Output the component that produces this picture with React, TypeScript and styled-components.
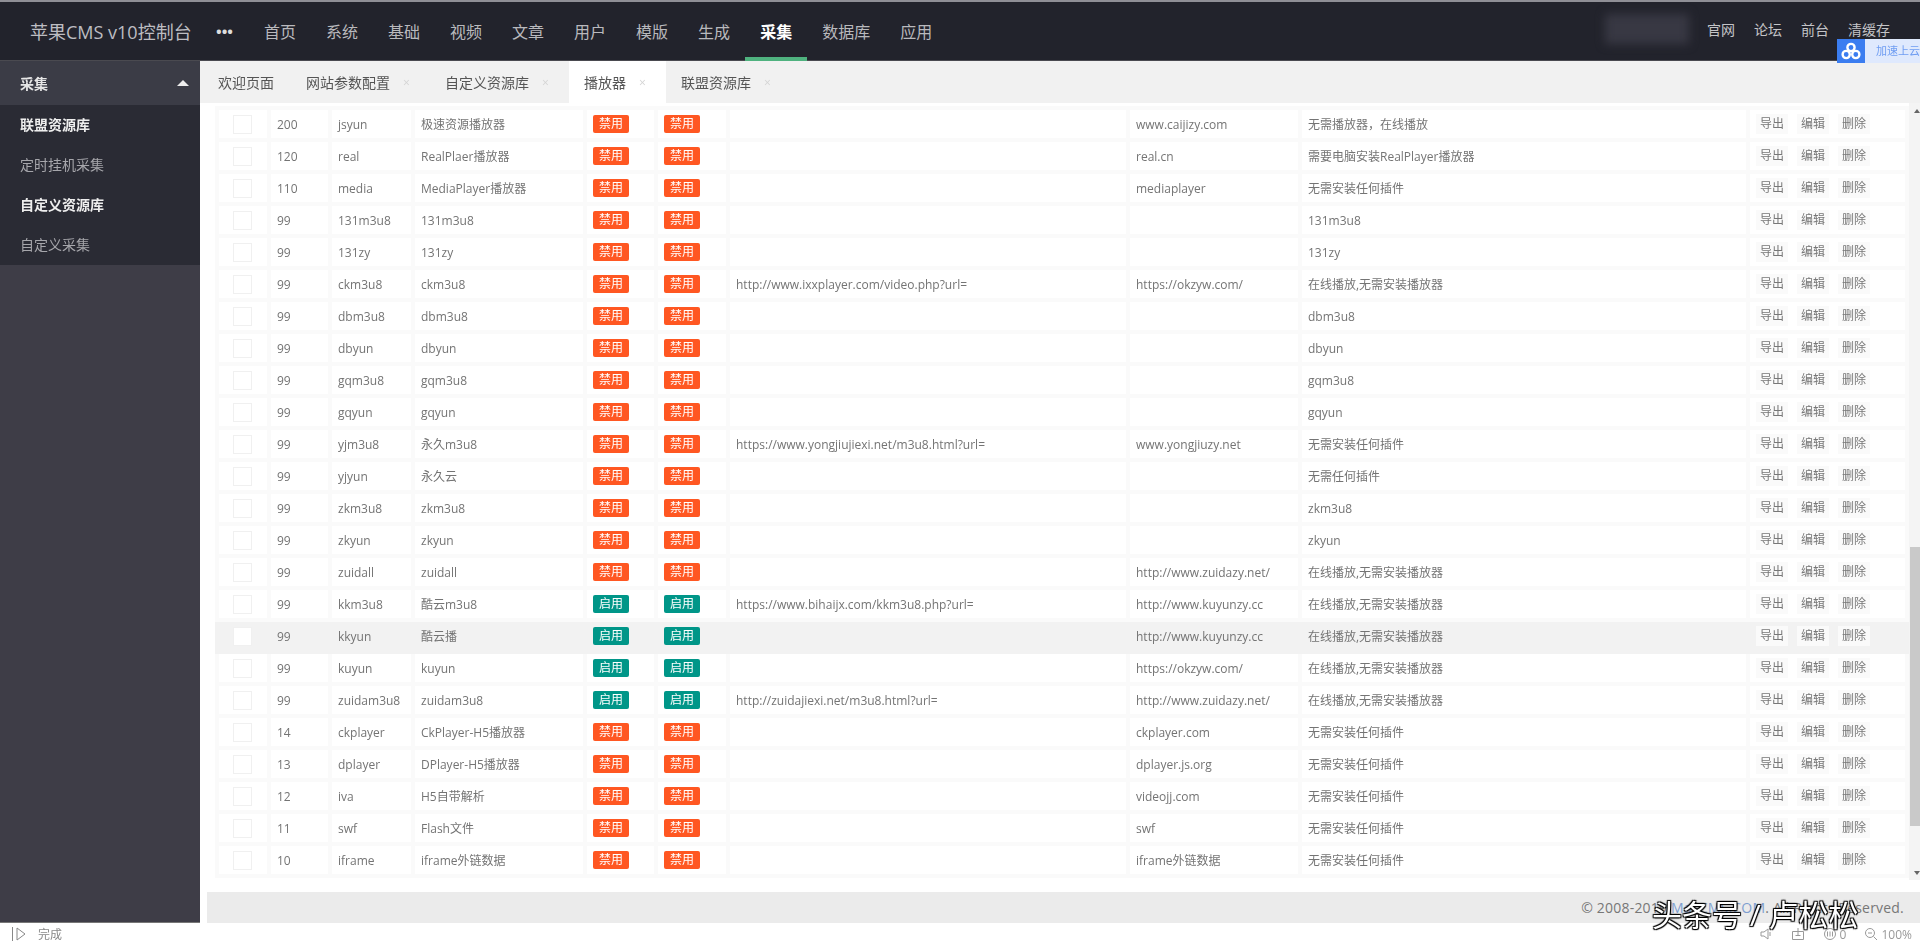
import React from "react";
import styled, { createGlobalStyle } from "styled-components";

const GlobalStyle = createGlobalStyle`
  html, body {
    margin: 0;
    padding: 0;
    height: 100%;
    overflow: hidden;
    background: #fff;
    font-family: "Open Sans", "Noto Sans CJK SC", sans-serif;
  }
  * { box-sizing: border-box; }
`;

const Page = styled.div`
  position: relative;
  width: 1920px;
  height: 945px;
`;

// 参考图本身是压缩过的，整体略糊
const Shot = styled.div`
  height: 100%;
  display: flex;
  flex-direction: column;
  filter: blur(0.55px);
`;

/* 顶部导航 */
const TopBar = styled.header`
  position: relative;
  height: 61px;
  flex: none;
  display: flex;
  align-items: center;
  padding-left: 30px;
  background: #22232c;
  border-top: 2px solid #8f8f96;
  border-bottom: 1px solid #4a4a50;
  color: #c9c9cc;
`;

const Logo = styled.div`
  width: 186px;
  font-size: 18px;
  color: #bdbdc2;
  white-space: nowrap;
`;

const More = styled.div`
  width: 33px;
  font-size: 15px;
  font-weight: 700;
  color: #ddd;
`;

const NavItem = styled.a<{ $active?: boolean }>`
  position: relative;
  align-self: stretch;
  display: flex;
  align-items: center;
  padding: 0 15px 1px;
  font-size: 16px;
  color: ${(p) => (p.$active ? "#fff" : "#b9b9bd")};
  font-weight: ${(p) => (p.$active ? 600 : 400)};
  &::after {
    content: "";
    display: ${(p) => (p.$active ? "block" : "none")};
    position: absolute;
    left: 0;
    right: 0;
    bottom: -1px;
    height: 4px;
    background: #4fb27f;
  }
`;

const TopRight = styled.div`
  margin-left: auto;
  display: flex;
  align-items: center;
  padding: 0 30px 4px 0;
  font-size: 14px;
`;

const BlurredName = styled.div`
  width: 84px;
  height: 30px;
  margin-right: 18px;
  background: #383843;
  filter: blur(5px);
`;

const TopLink = styled.a`
  margin-right: 19px;
  color: #c4c4c7;
  &:last-child {
    margin-right: 0;
  }
`;

const CloudWidget = styled.div`
  position: absolute;
  right: 0;
  top: 37px;
  width: 83px;
  height: 24px;
  display: flex;
  background: #dfe9fd;
  z-index: 3;
`;

const CloudIcon = styled.div`
  width: 28px;
  display: flex;
  align-items: center;
  justify-content: center;
  background: #3b7df0;
`;

const CloudText = styled.div`
  padding-left: 11px;
  font-size: 11px;
  line-height: 24px;
  color: #6f9df2;
  white-space: nowrap;
`;

const Main = styled.div`
  flex: 1;
  min-height: 0;
  display: flex;
`;

/* 左侧菜单 */
const Sidebar = styled.aside`
  width: 200px;
  flex: none;
  background: #3e3d47;
  border-bottom: 1px solid #777;
`;

const SideHead = styled.div`
  height: 44px;
  display: flex;
  align-items: center;
  justify-content: space-between;
  padding: 0 9px 0 20px;
  background: #3b3c46;
  font-size: 14px;
  font-weight: 600;
  color: #e6e6e6;
`;

const Caret = styled.span`
  width: 0;
  height: 0;
  margin-right: 2px;
  border-left: 6px solid transparent;
  border-right: 6px solid transparent;
  border-bottom: 6px solid #eee;
`;

const SideList = styled.div`
  background: #2a2b34;
`;

const SideItem = styled.div<{ $on?: boolean }>`
  height: 40px;
  line-height: 40px;
  padding-left: 20px;
  font-size: 14px;
  color: ${(p) => (p.$on ? "#eee" : "#a6a6ab")};
  font-weight: ${(p) => (p.$on ? 600 : 400)};
`;

const Content = styled.section`
  flex: 1;
  min-width: 0;
  display: flex;
  flex-direction: column;
`;

/* 标签栏 */
const Tabs = styled.div`
  height: 42px;
  flex: none;
  display: flex;
  padding-left: 3px;
  background: #f1f1f1;
`;

const Tab = styled.div<{ $active?: boolean }>`
  display: flex;
  align-items: center;
  padding: 0 15px;
  font-size: 14px;
  color: #555;
  background: ${(p) => (p.$active ? "#fff" : "transparent")};
  &:first-child {
    margin-right: 2px;
  }
`;

const TabClose = styled.span`
  width: 13px;
  margin-left: 10px;
  margin-right: 2px;
  text-align: center;
  font-size: 12px;
  color: #d4d4d4;
`;

const Body = styled.div`
  flex: 1;
  min-height: 0;
  display: flex;
  padding: 3px 0 15px 15px;
  background: #fff;
`;

const Grid = styled.table`
  width: 1690px;
  height: 768px;
  table-layout: fixed;
  border-collapse: collapse;
  font-size: 12px;
  color: #747474;
`;

const Row = styled.tr<{ $hover?: boolean }>`
  height: 32px;
  background: ${(p) => (p.$hover ? "#f2f2f2" : "#fff")};
`;

const Cell = styled.td<{ $hover?: boolean }>`
  padding: 0 0 0 6px;
  border: 4px solid ${(p) => (p.$hover ? "#f2f2f2" : "#fafafa")};
  white-space: nowrap;
  overflow: hidden;
`;

const Check = styled.div`
  width: 19px;
  height: 19px;
  margin-left: 8px;
  background: #fff;
  border: 1px solid #f0f0f0;
`;

const Badge = styled.span<{ $on: boolean }>`
  display: inline-block;
  width: 36px;
  height: 18px;
  line-height: 18px;
  text-align: center;
  font-size: 12px;
  color: #fff;
  border-radius: 2px;
  background: ${(p) => (p.$on ? "#009688" : "#ff5722")};
`;

const Actions = styled.div`
  display: flex;
`;

const ActionBtn = styled.a`
  width: 32px;
  height: 20px;
  margin-right: 9px;
  line-height: 20px;
  text-align: center;
  background: #fafafa;
  color: #777;
`;

/* 滚动条 */
const ScrollTrack = styled.div`
  width: 15px;
  flex: none;
  margin-top: -3px;
  margin-bottom: -15px;
  height: 777px;
  display: flex;
  flex-direction: column;
  align-items: center;
  background: #f4f4f4;
`;

const ScrollArrow = styled.div<{ $down?: boolean }>`
  height: 15px;
  flex: none;
  display: flex;
  align-items: center;
  justify-content: center;
  &::before {
    content: "";
    border-left: 3px solid transparent;
    border-right: 3px solid transparent;
    ${(p) => (p.$down ? "border-top: 4px solid #666;" : "border-bottom: 4px solid #666;")}
  }
`;

const ScrollGap = styled.div`
  flex: 1;
`;

const ScrollThumb = styled.div`
  width: 13px;
  height: 279px;
  margin-bottom: 39px;
  background: #c9c9c9;
`;

const Footer = styled.footer`
  height: 31px;
  flex: none;
  margin-left: 7px;
  padding-right: 16px;
  line-height: 31px;
  text-align: right;
  font-size: 14px;
  letter-spacing: 0.2px;
  color: #777;
  background: #ebebeb;
  a {
    color: #7f9fd0;
  }
`;

const StatusBar = styled.div`
  height: 22px;
  flex: none;
  display: flex;
  align-items: center;
  padding-left: 10px;
  font-size: 12px;
  color: #888;
  background: #fff;
`;

const StatusText = styled.span`
  margin-left: 10px;
`;

const StatusRight = styled.div`
  margin-left: auto;
  display: flex;
  align-items: center;
  padding-right: 8px;
  color: #999;
`;

const StatusItem = styled.span`
  display: flex;
  align-items: center;
  gap: 3px;
  margin-left: 18px;
`;

const Watermark = styled.div`
  position: absolute;
  left: 1652px;
  top: 896px;
  font-size: 30px;
  line-height: 38px;
  color: #fff;
  white-space: nowrap;
  text-shadow: 0 0 1px #000, 1px 1px 1px #000, -1px -1px 1px #000, 1px -1px 1px #000, -1px 1px 1px #000;
`;

type Player = {
  sort: number;
  code: string;
  name: string;
  on?: boolean;
  parse?: string;
  site?: string;
  tip: string;
};

const NO_PLUGIN = "无需安装任何插件";
const ONLINE = "在线播放,无需安装播放器";

const players: Player[] = [
  { sort: 200, code: "jsyun", name: "极速资源播放器", site: "www.caijizy.com", tip: "无需播放器，在线播放" },
  { sort: 120, code: "real", name: "RealPlaer播放器", site: "real.cn", tip: "需要电脑安装RealPlayer播放器" },
  { sort: 110, code: "media", name: "MediaPlayer播放器", site: "mediaplayer", tip: NO_PLUGIN },
  { sort: 99, code: "131m3u8", name: "131m3u8", tip: "131m3u8" },
  { sort: 99, code: "131zy", name: "131zy", tip: "131zy" },
  { sort: 99, code: "ckm3u8", name: "ckm3u8", parse: "http://www.ixxplayer.com/video.php?url=", site: "https://okzyw.com/", tip: ONLINE },
  { sort: 99, code: "dbm3u8", name: "dbm3u8", tip: "dbm3u8" },
  { sort: 99, code: "dbyun", name: "dbyun", tip: "dbyun" },
  { sort: 99, code: "gqm3u8", name: "gqm3u8", tip: "gqm3u8" },
  { sort: 99, code: "gqyun", name: "gqyun", tip: "gqyun" },
  { sort: 99, code: "yjm3u8", name: "永久m3u8", parse: "https://www.yongjiujiexi.net/m3u8.html?url=", site: "www.yongjiuzy.net", tip: NO_PLUGIN },
  { sort: 99, code: "yjyun", name: "永久云", tip: "无需任何插件" },
  { sort: 99, code: "zkm3u8", name: "zkm3u8", tip: "zkm3u8" },
  { sort: 99, code: "zkyun", name: "zkyun", tip: "zkyun" },
  { sort: 99, code: "zuidall", name: "zuidall", site: "http://www.zuidazy.net/", tip: ONLINE },
  { sort: 99, code: "kkm3u8", name: "酷云m3u8", on: true, parse: "https://www.bihaijx.com/kkm3u8.php?url=", site: "http://www.kuyunzy.cc", tip: ONLINE },
  { sort: 99, code: "kkyun", name: "酷云播", on: true, site: "http://www.kuyunzy.cc", tip: ONLINE },
  { sort: 99, code: "kuyun", name: "kuyun", on: true, site: "https://okzyw.com/", tip: ONLINE },
  { sort: 99, code: "zuidam3u8", name: "zuidam3u8", on: true, parse: "http://zuidajiexi.net/m3u8.html?url=", site: "http://www.zuidazy.net/", tip: ONLINE },
  { sort: 14, code: "ckplayer", name: "CkPlayer-H5播放器", site: "ckplayer.com", tip: NO_PLUGIN },
  { sort: 13, code: "dplayer", name: "DPlayer-H5播放器", site: "dplayer.js.org", tip: NO_PLUGIN },
  { sort: 12, code: "iva", name: "H5自带解析", site: "videojj.com", tip: NO_PLUGIN },
  { sort: 11, code: "swf", name: "Flash文件", site: "swf", tip: NO_PLUGIN },
  { sort: 10, code: "iframe", name: "iframe外链数据", site: "iframe外链数据", tip: NO_PLUGIN },
];

const navItems = ["首页", "系统", "基础", "视频", "文章", "用户", "模版", "生成", "采集", "数据库", "应用"];
const columnWidths = [52, 61, 83, 172, 71, 72, 400, 172, 448, 159];

const App: React.FC = () => {
  return (
    <Page>
      <GlobalStyle />
      <Shot>
        <TopBar>
          <Logo>苹果CMS v10控制台</Logo>
          <More>•••</More>
          {navItems.map((item) => (
            <NavItem key={item} $active={item === "采集"}>
              {item}
            </NavItem>
          ))}
          <TopRight>
            <BlurredName />
            <TopLink>官网</TopLink>
            <TopLink>论坛</TopLink>
            <TopLink>前台</TopLink>
            <TopLink>清缓存</TopLink>
          </TopRight>
          <CloudWidget>
            <CloudIcon>
              <svg width="20" height="18" viewBox="0 0 20 18" fill="none" stroke="#fff" strokeWidth="2.4">
                <circle cx="10" cy="5.5" r="3.6" />
                <circle cx="5.2" cy="12.5" r="3.6" />
                <circle cx="14.8" cy="12.5" r="3.6" />
              </svg>
            </CloudIcon>
            <CloudText>加速上云</CloudText>
          </CloudWidget>
        </TopBar>

        <Main>
          <Sidebar>
            <SideHead>
              采集
              <Caret />
            </SideHead>
            <SideList>
              <SideItem $on>联盟资源库</SideItem>
              <SideItem>定时挂机采集</SideItem>
              <SideItem $on>自定义资源库</SideItem>
              <SideItem>自定义采集</SideItem>
            </SideList>
          </Sidebar>

          <Content>
            <Tabs>
              <Tab>欢迎页面</Tab>
              <Tab>
                网站参数配置<TabClose>×</TabClose>
              </Tab>
              <Tab>
                自定义资源库<TabClose>×</TabClose>
              </Tab>
              <Tab $active>
                播放器<TabClose>×</TabClose>
              </Tab>
              <Tab>
                联盟资源库<TabClose>×</TabClose>
              </Tab>
            </Tabs>

            <Body>
              <Grid>
                <colgroup>
                  {columnWidths.map((w, i) => (
                    <col key={i} width={w} />
                  ))}
                </colgroup>
                <tbody>
                  {players.map((el) => {
                    const hover = el.code === "kkyun";
                    const on = !!el.on;
                    return (
                      <Row key={el.code} $hover={hover}>
                        <Cell $hover={hover}>
                          <Check />
                        </Cell>
                        <Cell $hover={hover}>{el.sort}</Cell>
                        <Cell $hover={hover}>{el.code}</Cell>
                        <Cell $hover={hover}>{el.name}</Cell>
                        <Cell $hover={hover}>
                          <Badge $on={on}>{on ? "启用" : "禁用"}</Badge>
                        </Cell>
                        <Cell $hover={hover}>
                          <Badge $on={on}>{on ? "启用" : "禁用"}</Badge>
                        </Cell>
                        <Cell $hover={hover}>{el.parse}</Cell>
                        <Cell $hover={hover}>{el.site}</Cell>
                        <Cell $hover={hover}>{el.tip}</Cell>
                        <Cell $hover={hover}>
                          <Actions>
                            <ActionBtn>导出</ActionBtn>
                            <ActionBtn>编辑</ActionBtn>
                            <ActionBtn>删除</ActionBtn>
                          </Actions>
                        </Cell>
                      </Row>
                    );
                  })}
                </tbody>
              </Grid>
              <ScrollTrack>
                <ScrollArrow />
                <ScrollGap />
                <ScrollThumb />
                <ScrollArrow $down />
              </ScrollTrack>
            </Body>

            <Footer>
              © 2008-2019 <a>MacCMS.COM</a>. All Rights Reserved.
            </Footer>
          </Content>
        </Main>

        <StatusBar>
          <svg width="18" height="16" viewBox="0 0 18 16" fill="none" stroke="#888" strokeWidth="1">
            <path d="M2.5 1v14M7 2l8 6-8 6z" />
          </svg>
          <StatusText>完成</StatusText>
          <StatusRight>
            <StatusItem>
              <svg width="14" height="14" viewBox="0 0 14 14" fill="none" stroke="#999">
                <path d="M2 5h3l4-3v10l-4-3H2zM11 5v4" />
              </svg>
            </StatusItem>
            <StatusItem>
              <svg width="14" height="14" viewBox="0 0 14 14" fill="none" stroke="#999">
                <path d="M1.5 4.5h11v8h-11zM7 1v7M4.5 8.5h5" />
              </svg>
            </StatusItem>
            <StatusItem>
              <svg width="14" height="14" viewBox="0 0 14 14" fill="none" stroke="#999">
                <circle cx="7" cy="7" r="5.5" />
                <path d="M4.5 4.5v5M7 4.5v5M9.5 4.5v5" />
              </svg>
              0
            </StatusItem>
            <StatusItem>
              <svg width="14" height="14" viewBox="0 0 14 14" fill="none" stroke="#999">
                <circle cx="6" cy="6" r="4.5" />
                <path d="M9.5 9.5l3.5 3.5M4 6h4" />
              </svg>
              100%
            </StatusItem>
          </StatusRight>
        </StatusBar>
      </Shot>

      <Watermark>头条号 / 卢松松</Watermark>
    </Page>
  );
};

export default App;
